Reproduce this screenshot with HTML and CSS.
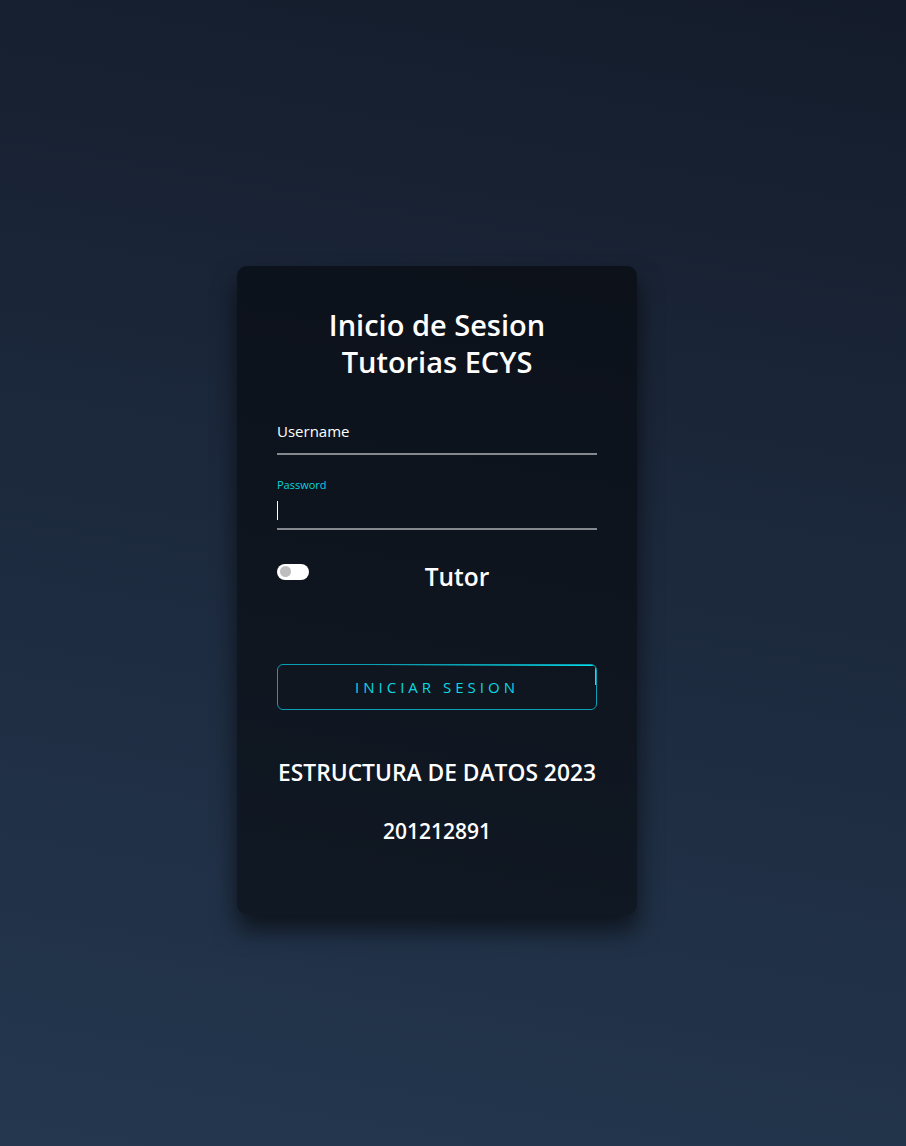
FILE: index.html
```html
<!DOCTYPE html>
<html lang="es">
<head>
<meta charset="utf-8">
<title>Inicio de Sesion</title>
<link rel="stylesheet" href="styles.css">
</head>
<body>
<main class="stage">
  <section class="card">
    <h2 class="title">Inicio de Sesion<br>Tutorias ECYS</h2>
    <div class="field field-user">
      <span class="label">Username</span>
    </div>
    <div class="field field-pass">
      <span class="label label-focus">Password</span>
      <span class="caret"></span>
    </div>
    <div class="toggle-row">
      <span class="toggle"><span class="knob"></span></span>
      <span class="toggle-text">Tutor</span>
    </div>
    <button class="btn" type="button">
      <span class="btn-line-top"></span>
      <span class="btn-line-right"></span>
      Iniciar Sesion
    </button>
    <p class="footer">ESTRUCTURA DE DATOS 2023</p>
    <p class="carnet">201212891</p>
  </section>
</main>
</body>
</html>
```
FILE: styles.css
```css
* { box-sizing: border-box; }
html, body { margin: 0; padding: 0; }
body {
  font-family: "Open Sans", "Noto Sans", sans-serif;
  background: linear-gradient(190deg, #141c2b 0%, #1b273a 40%, #24374f 100%);
  min-height: 1146px;
  color: #fff;
}
.stage {
  min-height: 1146px;
  display: flex;
  align-items: center;
  justify-content: center;
  padding: 34px 32px 0 0;
}
.card {
  width: 400px;
  padding: 40px 40px 40px;
  background: rgba(0, 0, 0, 0.5);
  border-radius: 10px;
  box-shadow: 0 15px 25px rgba(0, 0, 0, 0.6);
  display: flex;
  flex-direction: column;
}
.title {
  margin: 0 0 32px;
  text-align: center;
  font-size: 29px;
  font-weight: 600;
  line-height: 37px;
}
.field {
  position: relative;
  border-bottom: 2px solid #85898e;
}
.field-user {
  height: 43px;
  padding-top: 9px;
}
.field-pass {
  margin-top: 25px;
  height: 50px;
  padding-top: 0;
}
.label {
  display: block;
  font-size: 15px;
  line-height: 20px;
  color: #fff;
}
.label-focus {
  margin-top: -2px;
  font-size: 11px;
  line-height: 14px;
  color: #0bd3de;
}
.caret {
  display: block;
  margin-top: 9px;
  width: 1px;
  height: 19px;
  background: #fff;
}
.toggle-row {
  display: flex;
  align-items: flex-start;
  margin-top: 32px;
  height: 102px;
}
.toggle {
  margin-top: 2px;
  width: 32px;
  height: 16px;
  border-radius: 8px;
  background: #fff;
  display: flex;
  align-items: center;
  padding-left: 3px;
}
.knob {
  width: 11px;
  height: 11px;
  border-radius: 50%;
  background: #bdbdbd;
}
.toggle-text {
  flex: 1;
  text-align: center;
  font-size: 24.5px;
  font-weight: 600;
  line-height: 30px;
  padding-left: 8px;
}
.btn {
  position: relative;
  overflow: hidden;
  width: 100%;
  height: 46px;
  background: transparent;
  border: 1px solid #0a9fb3;
  border-radius: 6px;
  color: #0bd8e4;
  font-family: "Open Sans", "Noto Sans", sans-serif;
  font-size: 15px;
  letter-spacing: 4px;
  text-transform: uppercase;
  padding: 0;
}
.btn-line-top {
  position: absolute;
  top: -1px;
  right: 0;
  width: 70%;
  height: 2px;
  background: linear-gradient(90deg, transparent, #03e9f4);
}
.btn-line-right {
  position: absolute;
  top: 0;
  right: -1px;
  width: 2px;
  height: 20px;
  background: #03e9f4;
}
.footer {
  margin: 49px 0 0;
  text-align: center;
  font-size: 22.8px;
  font-weight: 600;
  line-height: 28px;
  white-space: nowrap;
}
.carnet {
  margin: 30px 0 0;
  text-align: center;
  font-size: 21px;
  font-weight: 600;
  line-height: 28px;
  padding-bottom: 30px;
}
```
